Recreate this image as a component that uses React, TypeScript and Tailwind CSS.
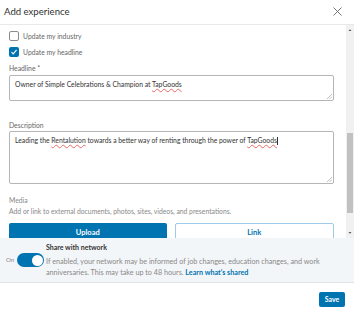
import React from "react";

const Grip = () => (
  <svg className="absolute right-[1px] bottom-[1px]" width="6" height="6" viewBox="0 0 6 6">
    <line x1="1" y1="6" x2="6" y2="1" stroke="#b0b0b0" strokeWidth="0.8" />
    <line x1="3.5" y1="6" x2="6" y2="3.5" stroke="#b0b0b0" strokeWidth="0.8" />
  </svg>
);

const Spell = ({ children }: { children: React.ReactNode }) => (
  <span className="underline decoration-wavy decoration-[#ec6a66] decoration-[0.5px] underline-offset-[1px]">{children}</span>
);

export default function App() {
  return (
    <div
      className="w-[354px] h-[309px] bg-white flex flex-col overflow-hidden text-[#333]"
      style={{ fontFamily: "Lato, 'Open Sans', sans-serif" }}
    >
      {/* Header */}
      <div className="h-[25px] shrink-0 border-b border-[#e6e9ec] flex items-center justify-between pl-[4px] pr-[12px]">
        <span className="text-[9.6px] leading-[12px] text-[#333] -mt-[1px]">Add experience</span>
        <svg width="9" height="9" viewBox="0 0 9 9" className="-mt-[1px]">
          <line x1="0.5" y1="0.5" x2="8.5" y2="8.5" stroke="#666" strokeWidth="0.9" />
          <line x1="8.5" y1="0.5" x2="0.5" y2="8.5" stroke="#666" strokeWidth="0.9" />
        </svg>
      </div>

      {/* Scroll body */}
      <div className="h-[213px] shrink-0 flex">
        <div className="flex-1 overflow-hidden pl-[9px] pr-[12px] pt-[6px]">
          <div className="flex items-center gap-[4px] h-[10px]">
            <div className="w-[10px] h-[10px] rounded-[2px] border border-[#8c8c8c] bg-white" />
            <span className="text-[6.8px] leading-[10px] text-[#666]">Update my industry</span>
          </div>
          <div className="flex items-center gap-[4px] h-[10px] mt-[6px]">
            <div className="w-[10px] h-[10px] rounded-[2px] bg-[#0073b1] flex items-center justify-center">
              <svg width="8" height="8" viewBox="0 0 8 8">
                <path d="M1.5 4.2 L3.2 5.9 L6.6 1.8" stroke="white" strokeWidth="1.1" fill="none" />
              </svg>
            </div>
            <span className="text-[6.8px] leading-[10px] text-[#666]">Update my headline</span>
          </div>

          <div className="mt-[6px] text-[6.8px] leading-[10px] text-[#666]">Headline *</div>
          <div className="relative mt-[2px] h-[26px] border border-[#b3b6b9] rounded-[2px] px-[5px] pt-[3px] text-[6.8px] leading-[10px] text-[#333]">
            Owner of Simple Celebrations &amp; Champion at <Spell>TapGoods</Spell>
            <Grip />
          </div>

          <div className="mt-[19px] text-[6.8px] leading-[10px] text-[#666]">Description</div>
          <div className="relative mt-[1px] h-[53px] border border-[#b3b6b9] rounded-[2px] px-[5px] pt-[3px] text-[6.8px] leading-[10px] text-[#333]">
            Leading the <Spell>Rentalution</Spell> towards a better way of renting through the power of <Spell>TapGoods</Spell>
            <span className="inline-block w-[0.6px] h-[8px] bg-[#333] align-middle" />
            <Grip />
          </div>

          <div className="mt-[11px] text-[6.8px] leading-[10px] text-[#888]">Media</div>
          <div className="mt-[1px] text-[6.8px] leading-[10px] text-[#888]">
            Add or link to external documents, photos, sites, videos, and presentations.
          </div>
          <div className="mt-[7px] flex gap-[8px]">
            <div className="flex-1 h-[20px] bg-[#0073b1] rounded-[2px] flex items-center justify-center text-[7.5px] font-bold text-white">
              Upload
            </div>
            <div className="flex-1 h-[20px] border border-[#9ecbe8] rounded-[2px] flex items-center justify-center text-[7.5px] font-bold text-[#0073b1]">
              Link
            </div>
          </div>
        </div>
        {/* scrollbar */}
        <div className="w-[8px] bg-[#f1f1f1] flex flex-col items-center">
          <svg width="8" height="8" viewBox="0 0 8 8" className="mt-[1px]">
            <path d="M2.5 5 L4 3.3 L5.5 5 Z" fill="#555" />
          </svg>
          <div className="mt-[99px] w-[6px] h-[80px] bg-[#c1c1c1]" />
          <div className="flex-1" />
          <svg width="8" height="8" viewBox="0 0 8 8" className="mb-[1px]">
            <path d="M2.5 3 L4 4.7 L5.5 3 Z" fill="#555" />
          </svg>
        </div>
      </div>

      {/* Share footer */}
      <div className="h-[45px] shrink-0 bg-[#f3f6f8] border-b border-[#e1e4e7] pt-[4px]">
        <div className="pl-[46px] text-[7px] leading-[11px] font-bold text-[#333]">Share with network</div>
        <div className="flex">
          <div className="w-[46px] shrink-0 flex items-center pl-[6px] gap-[3px] h-[14px]">
            <span className="text-[6px] leading-[8px] text-[#888]">On</span>
            <div className="w-[27px] h-[14px] rounded-full bg-[#0073b1] relative">
              <div className="absolute right-[1.5px] top-[1.5px] w-[11px] h-[11px] rounded-full bg-white" />
            </div>
          </div>
          <div className="pt-[3px] text-[7.2px] leading-[11px] text-[#888] pr-[26px]">
            If enabled, your network may be informed of job changes, education changes, and work anniversaries. This may take up to 48 hours.{" "}
            <span className="font-bold text-[#0073b1] leading-[11px]">Learn what’s shared</span>
          </div>
        </div>
      </div>

      {/* Bottom */}
      <div className="flex justify-end pr-[9px] pt-[9px]">
        <div className="w-[26px] h-[15px] bg-[#0073b1] rounded-[2px] flex items-center justify-center text-[7px] font-bold text-white">
          Save
        </div>
      </div>
    </div>
  );
}
